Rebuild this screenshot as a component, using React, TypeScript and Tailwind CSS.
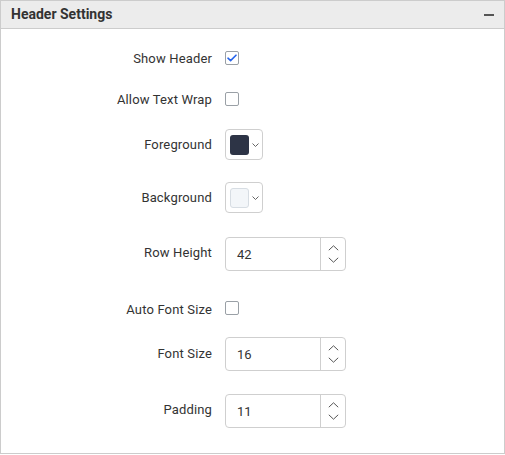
import React from 'react'

const labelCls = 'text-right text-[13px] tracking-[0.15px] text-[#333] leading-none'

const Checkbox = ({ checked }: { checked?: boolean }) => (
  <div className="w-[14px] h-[14px] rounded-[2px] border border-[#9aa0a6] bg-white flex items-center justify-center">
    {checked && (
      <svg width="10" height="8" viewBox="0 0 10 8" fill="none">
        <path d="M1 4.2 L3.6 6.6 L9 1.2" stroke="#2563eb" strokeWidth="1.6" strokeLinecap="round" strokeLinejoin="round" />
      </svg>
    )}
  </div>
)

const Chevron = ({ up }: { up?: boolean }) => (
  <svg width="11" height="6" viewBox="0 0 11 6" fill="none">
    <path d={up ? 'M0.8 5.2 L5.5 0.8 L10.2 5.2' : 'M0.8 0.8 L5.5 5.2 L10.2 0.8'} stroke="#555" strokeWidth="1" />
  </svg>
)

const ColorPicker = ({ swatch }: { swatch: string }) => (
  <div className="w-[38px] h-[31px] rounded-[4px] border border-[#cfcfcf] bg-white flex items-center pl-[4px] gap-[3px]">
    <div className={`w-[19px] h-[20px] rounded-[3px] ${swatch}`}></div>
    <svg width="7" height="4" viewBox="0 0 7 4" fill="none">
      <path d="M0.5 0.5 L3.5 3.5 L6.5 0.5" stroke="#555" strokeWidth="0.9" />
    </svg>
  </div>
)

const NumberInput = ({ value }: { value: string }) => (
  <div className="w-[121px] h-[34px] rounded-[4px] border border-[#cfcfcf] bg-white flex">
    <div className="flex-1 flex items-center pl-[11px] pt-[1px] text-[13px] text-[#333]">{value}</div>
    <div className="w-[25px] border-l border-[#cfcfcf] flex flex-col items-center justify-center gap-[6px]">
      <Chevron up />
      <Chevron />
    </div>
  </div>
)

const Row = ({
  label,
  children,
  className,
  labelShift,
}: {
  label: string
  children: React.ReactNode
  className?: string
  labelShift?: string
}) => (
  <div className={`grid grid-cols-[211px_1fr] gap-x-[13px] items-center ${className || ''}`}>
    <div className={`${labelCls} ${labelShift || '-mt-[1px]'}`}>{label}</div>
    <div className="flex">{children}</div>
  </div>
)

export default function App() {
  return (
    <div className="w-[505px] h-[454px] border border-[#cccccc] bg-white flex flex-col" style={{ fontFamily: 'Roboto, "Noto Sans", sans-serif' }}>
      <div className="h-[28px] bg-[#ececec] border-b border-[#cccccc] flex items-center justify-between pl-[10px] pr-[10px] shrink-0">
        <span className="text-[14px] font-bold text-[#333]">Header Settings</span>
        <div className="w-[10px] h-[2px] bg-[#555]"></div>
      </div>
      <div className="flex flex-col pt-[22px]">
        <Row label="Show Header" labelShift="mt-0">
          <Checkbox checked />
        </Row>
        <Row label="Allow Text Wrap" className="mt-[27px]" labelShift="mt-0">
          <Checkbox />
        </Row>
        <Row label="Foreground" className="mt-[23px]">
          <ColorPicker swatch="bg-[#2d3446]" />
        </Row>
        <Row label="Background" className="mt-[22px]">
          <ColorPicker swatch="bg-[#f3f6f9] border border-[#d7dde3]" />
        </Row>
        <Row label="Row Height" className="mt-[24px]" labelShift="-mt-[3px]">
          <NumberInput value="42" />
        </Row>
        <Row label="Auto Font Size" className="mt-[29px]" labelShift="mt-[3px]">
          <Checkbox />
        </Row>
        <Row label="Font Size" className="mt-[21px]" labelShift="-mt-[2px]">
          <NumberInput value="16" />
        </Row>
        <Row label="Padding" className="mt-[23px]" labelShift="-mt-[3px]">
          <NumberInput value="11" />
        </Row>
      </div>
    </div>
  )
}
